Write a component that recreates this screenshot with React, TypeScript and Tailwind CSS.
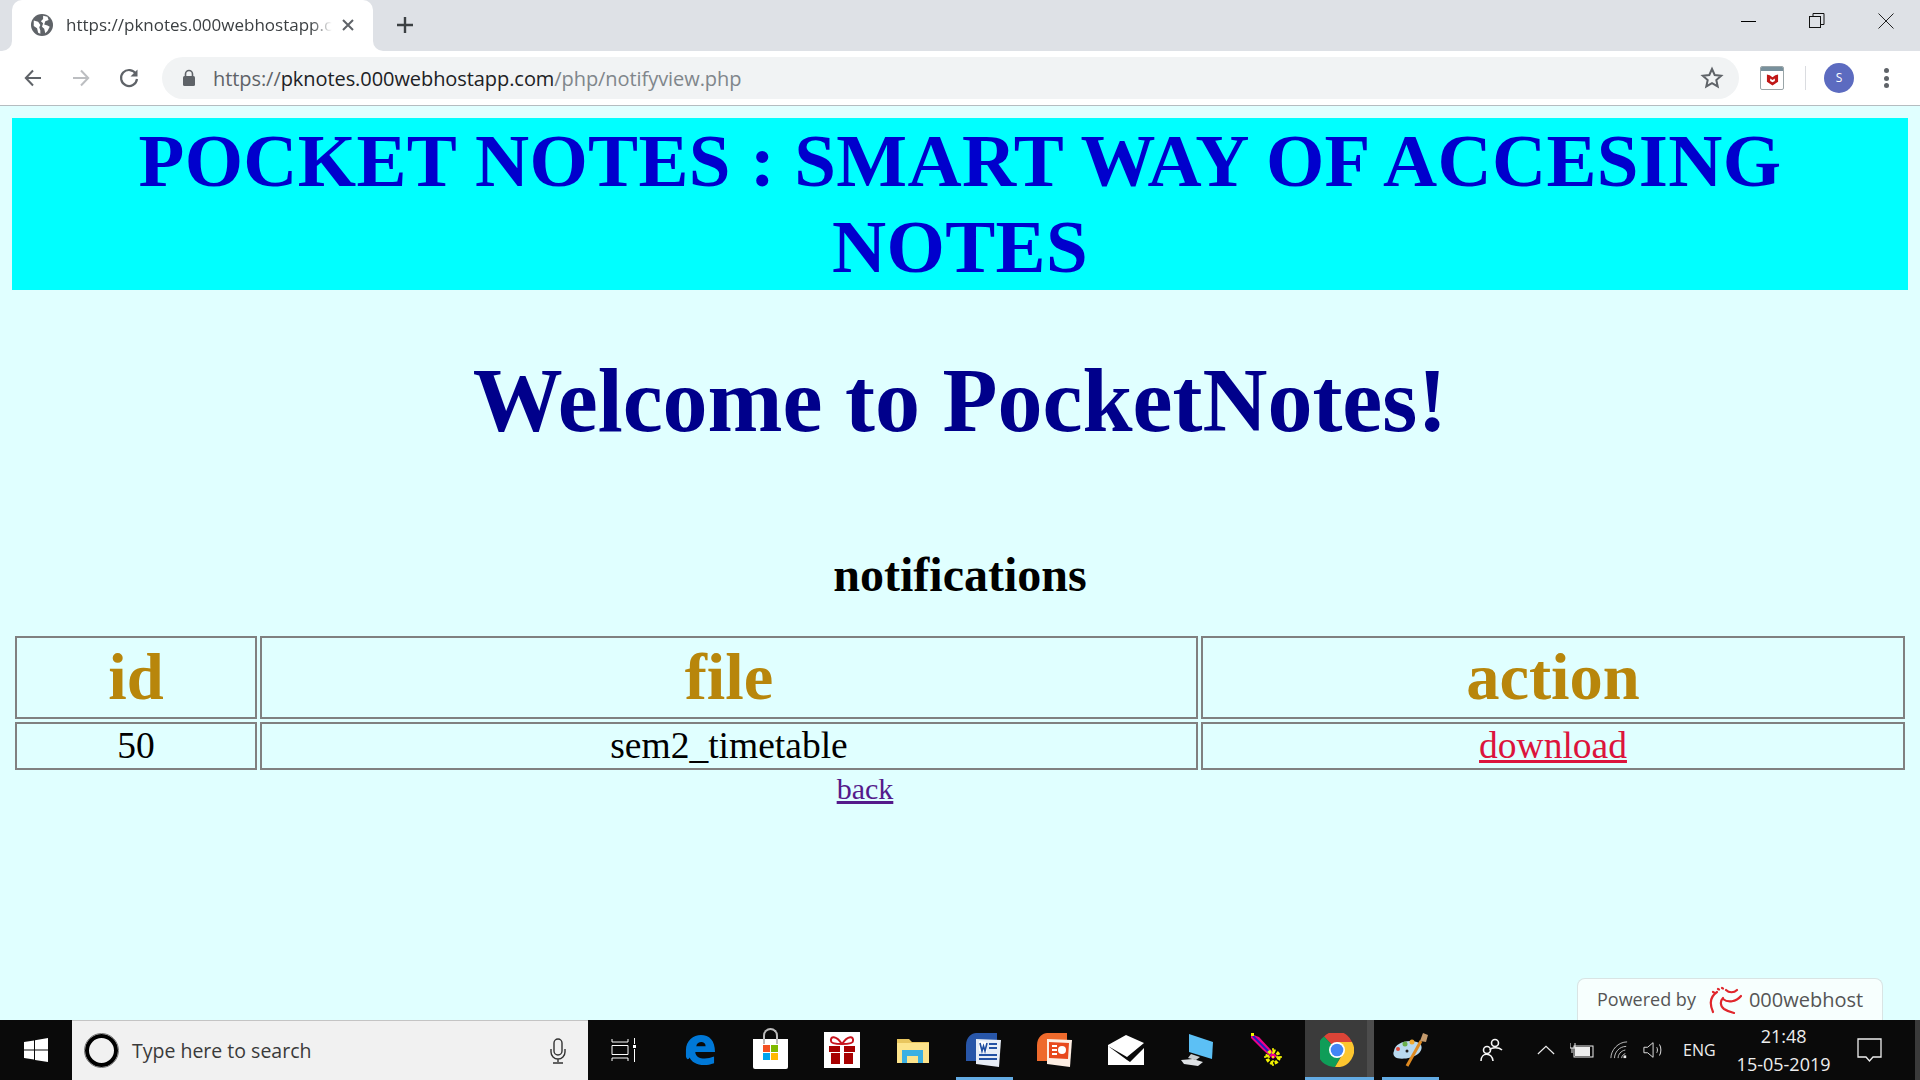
const UI = { fontFamily: '"Open Sans","Noto Sans",sans-serif' };

function Globe() {
  return (
    <svg width="22" height="22" viewBox="0 0 20 20">
      <circle cx="10" cy="10" r="10" fill="#5f6368" />
      <path d="M2.500 6l4 1 2 3-1 2 1 3v3l-2-1-1-4-3-2zM11 1.500l4 1 1 3-3 1-1 3 3 1 2 1-2 4-2 2-1-4-2-2 1-3-2-2 2-2z" fill="#fff" />
    </svg>
  );
}

function Toolbar() {
  return (
    <div className="h-[55px] bg-white border-b border-[#b5bcc0] flex items-center relative">
      <svg className="ml-[23px]" width="20" height="20" viewBox="0 0 20 20" fill="none" stroke="#5f6368" strokeWidth="2"><path d="M18 10H3M10 2.500 2.800 10l7.200 7.500" /></svg>
      <svg className="ml-[28px]" width="20" height="20" viewBox="0 0 20 20" fill="none" stroke="#bcbec1" strokeWidth="2"><path d="M2 10h15M10 2.500l7.200 7.500-7.200 7.500" /></svg>
      <svg className="ml-[27px]" width="22" height="22" viewBox="0 0 22 22" fill="none" stroke="#5f6368" strokeWidth="2.200"><path d="M18 7a8 8 0 1 0 1 5" /><path d="M19.500 2.500v7h-7z" fill="#5f6368" stroke="none" /></svg>
      <div className="ml-[22px] w-[1577px] h-[42px] rounded-full bg-[#f1f3f4] flex items-center pl-[20px]">
        <svg width="14" height="18" viewBox="0 0 14 18"><rect x="1" y="7" width="12" height="10" rx="1.500" fill="#5f6368" /><path d="M3.500 7V5a3.500 3.500 0 0 1 7 0v2" fill="none" stroke="#5f6368" strokeWidth="1.600" /></svg>
        <div className="ml-[17px] mt-[2px] text-[20px] tracking-[-0.07px] whitespace-nowrap" style={UI}>
          <span className="text-[#5f6368]">https://</span><span className="text-[#202124]">pknotes.000webhostapp.com</span><span className="text-[#80868b]">/php/notifyview.php</span>
        </div>
        <svg className="ml-auto mr-[15px]" width="24" height="24" viewBox="0 0 24 24" fill="none" stroke="#5f6368" strokeWidth="2"><path d="M12 3l2.700 6 6.500.7-4.900 4.300 1.400 6.400L12 17.100l-5.700 3.300 1.400-6.400L2.800 9.700 9.300 9z" /></svg>
      </div>
      <div className="ml-[21px] w-[24px] h-[24px] rounded-[2px] border border-[#9aa5a8] bg-white flex flex-col overflow-hidden">
        <div className="h-[4px] bg-[#78909c]" />
        <svg className="mx-auto mt-[2px]" width="13" height="14" viewBox="0 0 14 14"><path d="M1 1l3 1 3 2 3-2 3-1v8l-6 4-6-4z" fill="#c01818" /><path d="M4.500 5.500 7 7l2.500-1.500V8L7 9.500 4.500 8z" fill="#fff" /></svg>
      </div>
      <div className="ml-[21px] w-px h-[24px] bg-[#dadce0]" />
      <div className="ml-[18px] w-[30px] h-[30px] rounded-full bg-[#5c6bc0] text-white text-[12px] flex items-center justify-center" style={UI}>S</div>
      <div className="ml-[30px] flex flex-col gap-[2.500px]">
        <div className="w-[5px] h-[5px] rounded-full bg-[#5f6368]" />
        <div className="w-[5px] h-[5px] rounded-full bg-[#5f6368]" />
        <div className="w-[5px] h-[5px] rounded-full bg-[#5f6368]" />
      </div>
    </div>
  );
}

function TabStrip() {
  return (
    <div className="h-[51px] bg-[#dee1e6] flex items-end relative">
      <div className="ml-[12px] w-[361px] h-[51px] bg-white rounded-t-[10px] flex items-center pl-[19px] pb-[2px] relative">
        <div className="absolute -left-[10px] bottom-0 w-[10px] h-[10px] bg-white"><div className="w-full h-full bg-[#dee1e6] rounded-br-[10px]" /></div>
        <div className="absolute -right-[10px] bottom-0 w-[10px] h-[10px] bg-white"><div className="w-full h-full bg-[#dee1e6] rounded-bl-[10px]" /></div>
        <Globe />
        <div className="ml-[13px] w-[266px] overflow-hidden whitespace-nowrap text-[17px] text-[#3c4043] [mask-image:linear-gradient(to_right,black_92%,transparent)]" style={UI}>https://pknotes.000webhostapp.c</div>
        <svg className="ml-[10px]" width="12" height="12" viewBox="0 0 12 12" stroke="#5f6368" strokeWidth="2"><path d="M1 1l10 10M11 1 1 11" /></svg>
      </div>
      <svg className="ml-[22px] mb-[16px]" width="20" height="20" viewBox="0 0 20 20" stroke="#3c4043" strokeWidth="2.400"><path d="M10 2v16M2 10h16" /></svg>
      <div className="ml-auto flex items-center h-[42px] self-start">
        <div className="w-[69px] flex justify-center pl-[1px]"><div className="w-[15px] h-px bg-black" /></div>
        <div className="w-[69px] flex justify-center">
          <svg width="16" height="16" viewBox="0 0 16 16" fill="none" stroke="#111"><rect x="0.500" y="3.500" width="11" height="11" /><path d="M4 3.500V.5h11v11h-3" /></svg>
        </div>
        <div className="w-[69px] flex justify-center">
          <svg width="16" height="16" viewBox="0 0 16 16" stroke="#222"><path d="M.5.500l15 15M15.500.500l-15 15" /></svg>
        </div>
      </div>
    </div>
  );
}

function Page() {
  const serif = { fontFamily: '"Liberation Serif",serif' };
  return (
    <div className="h-[914px] bg-[#e0ffff] px-[12px] pt-[12px] relative overflow-hidden" style={serif}>
      <div className="bg-[#00ffff] text-[#0000cd] text-[75px] leading-[86px] font-bold text-center h-[172px] tracking-[0.33px]">POCKET NOTES : SMART WAY OF ACCESING NOTES</div>
      <h1 className="text-[#00008b] text-[90px] leading-[96px] font-bold text-center mt-[63px]">Welcome to PocketNotes!</h1>
      <h2 className="text-black text-[48px] leading-[52px] font-bold text-center mt-[100px]">notifications</h2>
      <table className="w-[1896px] border-separate border-spacing-[3px] mt-[32px] table-fixed">
        <colgroup><col className="w-[242px]" /><col className="w-[938px]" /><col /></colgroup>
        <tbody>
          <tr className="h-[83px]">
            {['id', 'file', 'action'].map((h) => (
              <th key={h} className="border-2 border-[#808080] text-[#b8860b] text-[66.5px] leading-[72px] font-bold p-0 pb-[2px]">{h}</th>
            ))}
          </tr>
          <tr className="h-[48px]">
            <td className="border-2 border-[#808080] text-center text-[37.5px] leading-[40px] text-black p-0">50</td>
            <td className="border-2 border-[#808080] text-center text-[37.5px] leading-[40px] text-black p-0">sem2_timetable</td>
            <td className="border-2 border-[#808080] text-center text-[37.5px] leading-[40px] p-0"><a className="text-[#dc143c] underline">download</a></td>
          </tr>
        </tbody>
      </table>
      <div className="text-center w-[1706px] text-[30px] leading-[36px] mt-[-2px]"><a className="text-[#551a8b] underline">back</a></div>
      <div className="absolute left-[1577px] bottom-0 w-[306px] h-[42px] bg-[#f7fffe] border border-b-0 border-[#d9e4e4] rounded-t-[8px] flex items-center pl-[19px]" style={UI}>
        <span className="text-[18px] text-[#555]">Powered by</span>
        <svg className="ml-[10px]" width="36" height="30" viewBox="0 0 36 30" fill="none" stroke="#e0262c" strokeWidth="2.200" strokeLinecap="round"><path d="M11 7C5 11 3 18 7 27M17 13c-3 3-3 8 1 11 3 2 6 3 10 4M17 14c5 4 13 3 18-3M20 5c3 3 8 3 11 0M16 3l1 .5M12 4l1 .5M7 7l1 .5" /></svg>
        <span className="ml-[7px] text-[20px] font-medium text-[#555]">000webhost</span>
      </div>
    </div>
  );
}

function Cell({ w, children }: { w: string; children: React.ReactNode }) {
  return <div className={`${w} h-full flex items-center justify-center shrink-0 relative`}>{children}</div>;
}

function Taskbar() {
  return (
    <div className="h-[60px] bg-[#0a0a0a] flex items-stretch text-white relative" style={UI}>
      <div className="w-[72px] flex items-center justify-center">
        <svg width="24" height="24" viewBox="0 0 24 24" fill="#fff"><path d="M0 4l10-1.500V11.500H0zM11 2.300 24 0v11.500H11zM0 12.500h10v9L0 20zM11 12.500h13V24l-13-2z" /></svg>
      </div>
      <div className="w-[516px] bg-[#f1f1f1] border-t border-[#c4c4c4] flex items-center">
        <div className="ml-[13px] w-[33px] h-[33px] rounded-full border-[4px] border-black outline outline-1 outline-[#777]" />
        <span className="ml-[14px] text-[19.5px] text-[#3a3a3a]">Type here to search</span>
        <svg className="ml-auto mr-[22px]" width="16" height="26" viewBox="0 0 16 26" fill="none" stroke="#333" strokeWidth="1.400"><rect x="4" y="1" width="8" height="16" rx="4" /><path d="M1 11v3a7 7 0 0 0 14 0v-3M8 21v3M3 25h10" /></svg>
      </div>
      <Cell w="w-[72px]">
        <svg width="26" height="24" viewBox="0 0 26 24" fill="none" stroke="#fff"><path d="M1 1v3h16V1M1 7.500h16v9H1zM1 23v-3h16v3M23.500 0v6M23.500 11v13" /><rect x="22" y="7" width="3" height="3" fill="#fff" stroke="none" /></svg>
      </Cell>
      <Cell w="w-[80px]">
        <svg width="30" height="32" viewBox="0 0 32 34"><path d="M1 17C1 7 9 1 17 1c9 0 15 6 15 18H11c0 7 10 9 20 5v7c-13 5-24 0-26-6-1 2-3 3-4-1 0-3 0-4 0-7zm11-4h10c0-6-9-6-10 0z" fill="#0078d7" /></svg>
      </Cell>
      <Cell w="w-[60px]">
        <div className="w-[35px] h-[30px] bg-white rounded-b-[2px] mt-[8px] relative">
          <div className="absolute left-[10px] -top-[11px] w-[15px] h-[16px] rounded-t-full border-2 border-[#bbb] border-b-0" />
          <div className="absolute left-[10px] top-[6px] grid grid-cols-2 gap-px">
            <div className="w-[7px] h-[7px] bg-[#f25022]" /><div className="w-[7px] h-[7px] bg-[#7fba00]" /><div className="w-[7px] h-[7px] bg-[#00a4ef]" /><div className="w-[7px] h-[7px] bg-[#ffb900]" />
          </div>
        </div>
      </Cell>
      <Cell w="w-[84px]">
        <svg width="36" height="36" viewBox="0 0 36 36"><rect width="36" height="36" fill="#fff" /><path d="M5 14h26v6H5zM7 21h22v11H7z" fill="#a80000" /><rect x="16" y="13" width="4" height="19" fill="#fff" /><path d="M18 12C12 3 6 4 7 9c0 2 5 3 11 3zm0 0c6-9 12-8 11-3 0 2-5 3-11 3z" fill="none" stroke="#c8141e" strokeWidth="2" /></svg>
      </Cell>
      <Cell w="w-[58px]">
        <svg width="32" height="27" viewBox="0 0 32 27"><path d="M0 2h12l3 3h17v21H0z" fill="#e9c65f" /><rect y="6" width="32" height="20" fill="#fde48c" /><path d="M5 13h21v13h-5v-7H10v7H5z" fill="#3cb0e2" /></svg>
      </Cell>
      <Cell w="w-[82px] mr-[2px]">
        <div className="absolute bottom-0 left-[14px] w-[57px] h-[3px] bg-[#63abe3]" />
        <svg width="35" height="34" viewBox="0 0 35 34"><path d="M0 12C0 4 6 0 10 0h21v30L10 28H0z" fill="#2856a8" /><path d="M10 6l25 1-2 27-23-3z" fill="#e8eef7" /><path d="M13 8l8 1 0 10-8-1z" fill="#fff" /><path d="M14 10l2 8 1.500-5 1.500 5 2-8" fill="none" stroke="#1d4ca0" strokeWidth="1.600" /><path d="M23 11h8M23 15h8M13 22h18M13 26h18" stroke="#2452a4" strokeWidth="2" /></svg>
      </Cell>
      <Cell w="w-[56px]">
        <svg width="35" height="34" viewBox="0 0 35 34"><path d="M0 12C0 4 6 0 10 0h20v30L10 28H0z" fill="#ee6a2c" /><path d="M10 6l25 1-2 27-23-3z" fill="#fdeee3" /><path d="M12 9l20 1-1 16-19-1z" fill="#e8491c" /><circle cx="25" cy="17" r="4" fill="#fff" /><path d="M15 13h5M15 17h5M15 21h5" stroke="#fff" strokeWidth="2" /></svg>
      </Cell>
      <Cell w="w-[88px]">
        <svg width="36" height="30" viewBox="0 0 36 30"><path d="M0 10 18 0l18 8v22H0z" fill="#fff" /><path d="M0 11l19 11L36 8v5L22 27l-3-2z" fill="#0a0a0a" /></svg>
      </Cell>
      <Cell w="w-[54px]">
        <svg width="32" height="32" viewBox="0 0 32 32"><path d="M8 0l24 8-1 17L8 18z" fill="#5cc0f5" /><path d="M10 20l9 3-4 3-8-2z" fill="#c9ced2" /><path d="M0 26l12-1 10 3-5 4-14-2z" fill="#dfe2e5" /></svg>
      </Cell>
      <Cell w="w-[81px]">
        <svg width="34" height="34" viewBox="0 0 34 34" className="ml-[3px]"><path d="M2 1l8 3 12 13 6 6-4 3-10-9L2 5z" fill="#f0008a" /><path d="M4 3l18 18" stroke="#2020c0" strokeWidth="2" /><path d="M2 0h3v3H2z" fill="#f2f200" /><circle cx="24" cy="24" r="6" fill="none" stroke="#f2f200" strokeWidth="3.500" strokeDasharray="3 1.500" /><path d="M15 24h18M24 15v18" stroke="#f2f200" strokeWidth="1.500" strokeDasharray="2 2" /></svg>
      </Cell>
      <div className="w-[69px] bg-[#3b3b3b] relative flex items-center justify-center shrink-0 pr-[5px]">
        <div className="absolute right-0 top-0 bottom-0 w-[7px] bg-[#4c4c4c]" />
        <div className="absolute bottom-0 left-0 right-0 h-[3px] bg-[#63abe3]" />
        <svg width="34" height="34" viewBox="0 0 34 34">
          <path d="M17 17 4 3.500A17 17 0 0 1 32 9H17z" fill="#db4437" />
          <path d="M17 17 4 3.500A17 17 0 0 0 15 34l6-11z" fill="#0f9d58" />
          <path d="M17 9h15a17 17 0 0 1-17 25l7-12z" fill="#fdc62f" />
          <circle cx="17" cy="17" r="8" fill="#fff" /><circle cx="17" cy="17" r="6.300" fill="#4285f4" />
        </svg>
      </div>
      <Cell w="w-[57px] ml-[8px]">
        <div className="absolute bottom-0 left-0 w-[57px] h-[3px] bg-[#63abe3]" />
        <svg width="36" height="36" viewBox="0 0 36 36">
          <path d="M1 19C2 11 14 7 24 10c6 2 6 8 1 12-6 5-20 6-23 3-2-2-2-4-1-6z" fill="#b8d9ef" />
          <circle cx="5" cy="17" r="2" fill="#e24a3a" /><circle cx="12" cy="12" r="2.500" fill="#6ab04c" /><circle cx="19" cy="10" r="2.500" fill="#f0a830" /><circle cx="14" cy="19" r="1.500" fill="#222" />
          <path d="M14 34 28 9" stroke="#df8a20" strokeWidth="3" /><path d="M27 9l3-8 5 2-2 7z" fill="#c49a6c" />
        </svg>
      </Cell>
      <Cell w="w-[106px]">
        <svg width="24" height="26" viewBox="0 0 24 26" fill="none" stroke="#f5f5f5" strokeWidth="1.600"><circle cx="15" cy="6" r="3.500" /><path d="M10 13c1-3 9-3 12 0" /><circle cx="7" cy="13" r="3.500" /><path d="M1 24c0-9 11-9 12 0" /></svg>
      </Cell>
      <div className="flex items-center shrink-0 -ml-[8px]">
        <svg width="18" height="10" viewBox="0 0 20 10" fill="none" stroke="#eee" strokeWidth="1.300"><path d="M1 9.500 10 1l9 8.500" /></svg>
        <svg className="ml-[15px]" width="24" height="16" viewBox="0 0 24 16"><rect x="4" y="4" width="19" height="11" fill="none" stroke="#eee" /><rect x="5" y="5" width="15" height="9" fill="#eee" /><path d="M0 1v5h5V1M2 6v5" fill="none" stroke="#eee" /></svg>
        <svg className="ml-[16px]" width="18" height="18" viewBox="0 0 20 20" fill="none" stroke="#ccc"><path d="M1 19C1 10 9 1 19 1M5 19c0-6 5-13 13-13M9 19c0-4 3-8 8-9M13 19c0-2 1-4 4-5" /><rect x="15" y="16" width="3" height="3" fill="#eee" stroke="none" /></svg>
        <svg className="ml-[15px]" width="22" height="20" viewBox="0 0 24 20" fill="none" stroke="#eee"><path d="M1 7h4l6-5v16l-6-5H1zM15 7c1 2 1 4 0 6M18 4c2 3 2 9 0 12" /></svg>
        <span className="ml-[18px] text-[16px] text-[#eee]">ENG</span>
      </div>
      <div className="w-[112px] ml-[12px] flex flex-col items-center justify-center text-[18px] leading-[28px] text-[#eee] shrink-0">
        <span>21:48</span>
        <span>15-05-2019</span>
      </div>
      <div className="flex items-center pl-[17px]">
        <svg width="26" height="26" viewBox="0 0 26 26" fill="none" stroke="#eee" strokeWidth="1.300"><path d="M1 2h23v18h-8l-3.500 4L9 20H1z" /></svg>
      </div>
      <div className="absolute right-0 top-0 bottom-0 w-[5px] bg-[#3a3a3a]" />
    </div>
  );
}

export default function App() {
  return (
    <div className="w-[1920px] h-[1080px] overflow-hidden">
      <TabStrip />
      <Toolbar />
      <Page />
      <Taskbar />
    </div>
  );
}
